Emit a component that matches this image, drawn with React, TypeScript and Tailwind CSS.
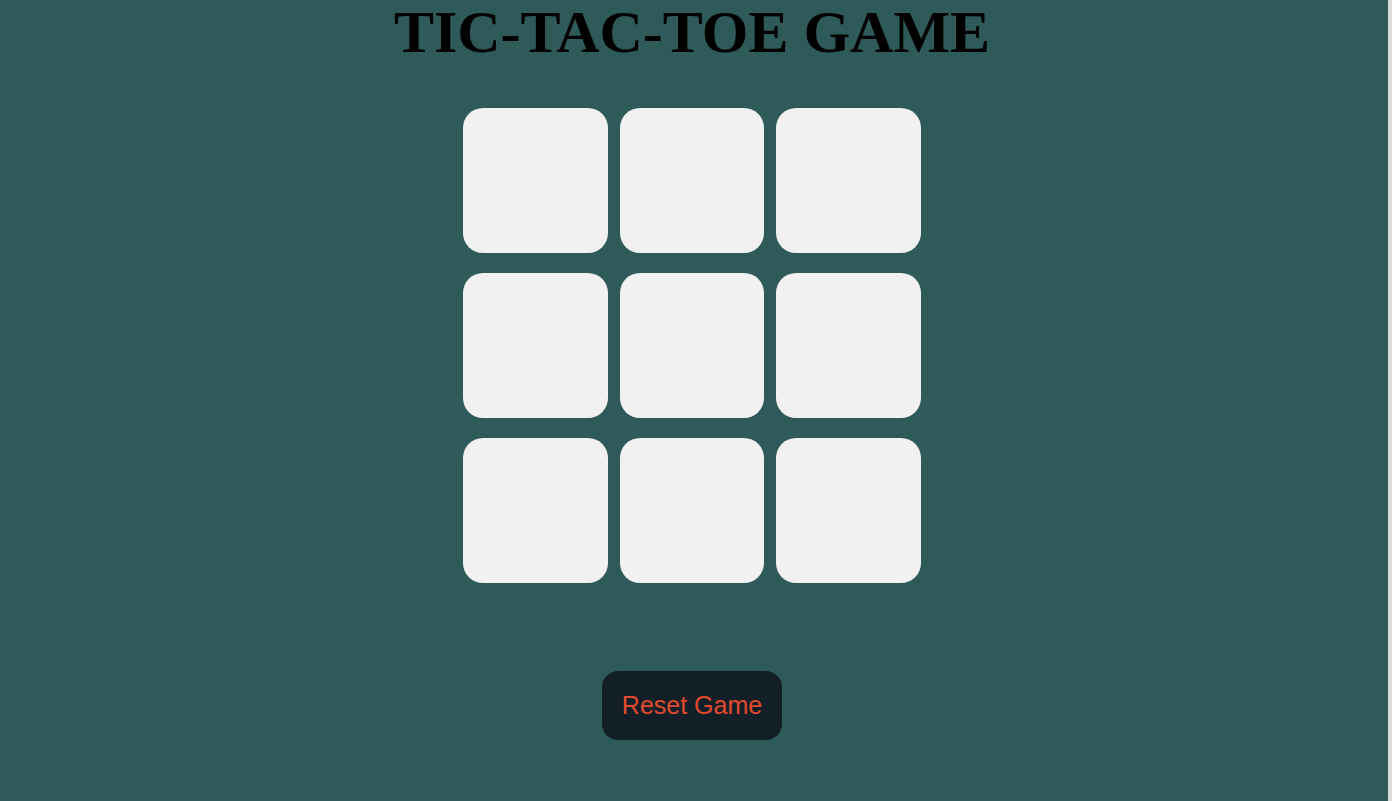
export default function App() {
  const cells = Array.from({ length: 9 }, (_, i) => i);

  return (
    <div className="flex min-h-[801px] w-full bg-[#2e5a59]">
      <main className="flex flex-1 flex-col items-center pr-[4px]">
        <h1 className="m-0 text-[60px] font-bold leading-[65px] text-black [font-family:'Liberation_Serif',serif]">
          TIC-TAC-TOE GAME
        </h1>

        <div className="mt-[43px] grid grid-cols-[145px_144px_145px] gap-x-3 gap-y-5">
          {cells.map((i) => (
            <button
              key={i}
              className="h-[145px] rounded-[20px] bg-[#f1f1f1]"
              aria-label={`cell ${i + 1}`}
            />
          ))}
        </div>

        <button className="mt-[88px] rounded-[16px] bg-[#131f26] px-5 py-5 text-[25px] leading-[29px] text-[#e24a30] [font-family:'Liberation_Sans',Arial,sans-serif]">
          Reset Game
        </button>
      </main>
      <div className="w-[4px] bg-[#dddddd]" />
    </div>
  );
}
